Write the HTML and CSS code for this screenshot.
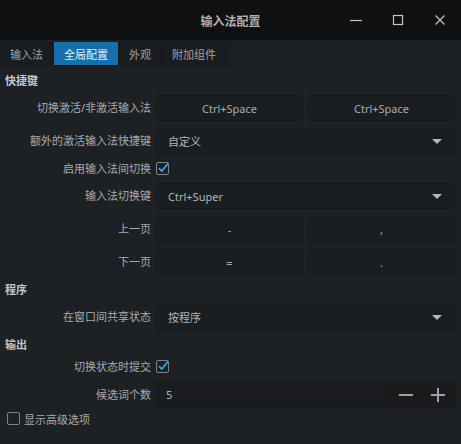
FILE: index.html
```html
<!DOCTYPE html>
<html lang="zh">
<head>
<meta charset="utf-8">
<link rel="stylesheet" href="styles.css">
</head>
<body>
<div class="window">
  <div class="titlebar">
    <div></div>
    <div class="title">输入法配置</div>
    <div class="controls">
      <div class="ctl"><svg width="14" height="14" viewBox="0 0 14 14"><path d="M1 7.5H13" stroke="#c4c4c4" stroke-width="1.2"/></svg></div>
      <div class="ctl"><svg width="14" height="14" viewBox="0 0 14 14"><rect x="2.5" y="2.5" width="9" height="9" fill="none" stroke="#c4c4c4" stroke-width="1.2"/></svg></div>
      <div class="ctl"><svg width="14" height="14" viewBox="0 0 14 14"><path d="M2.5 2.5L11.5 11.5M11.5 2.5L2.5 11.5" stroke="#c4c4c4" stroke-width="1.2"/></svg></div>
    </div>
  </div>
  <div class="tabs">
    <div class="tab">输入法</div>
    <div class="tab active">全局配置</div>
    <div class="tab">外观</div>
    <div class="tab">附加组件</div>
  </div>
  <div class="content">
    <div class="heading">快捷键</div>
    <div class="form">
      <div class="label">切换激活/非激活输入法</div>
      <div class="pair"><div class="btn">Ctrl+Space</div><div class="btn">Ctrl+Space</div></div>

      <div class="label">额外的激活输入法快捷键</div>
      <div class="combo"><span>自定义</span><i class="arrow"></i></div>

      <div class="label short">启用输入法间切换</div>
      <div class="checkrow"><span class="check on"><svg width="14" height="14" viewBox="0 0 14 14"><path d="M3 7.2L5.8 10L12 2.5" fill="none" stroke="#3daee9" stroke-width="1.6"/></svg></span></div>

      <div class="label">输入法切换键</div>
      <div class="combo"><span>Ctrl+Super</span><i class="arrow"></i></div>

      <div class="label">上一页</div>
      <div class="pair"><div class="btn">-</div><div class="btn">,</div></div>

      <div class="label">下一页</div>
      <div class="pair"><div class="btn">=</div><div class="btn">.</div></div>
    </div>

    <div class="heading">程序</div>
    <div class="form">
      <div class="label">在窗口间共享状态</div>
      <div class="combo"><span>按程序</span><i class="arrow"></i></div>
    </div>

    <div class="heading">输出</div>
    <div class="form">
      <div class="label short">切换状态时提交</div>
      <div class="checkrow"><span class="check on"><svg width="14" height="14" viewBox="0 0 14 14"><path d="M3 7.2L5.8 10L12 2.5" fill="none" stroke="#3daee9" stroke-width="1.6"/></svg></span></div>

      <div class="label">候选词个数</div>
      <div class="spin">
        <div class="spinval">5</div>
        <div class="spinbtns">
          <svg width="16" height="16" viewBox="0 0 16 16"><path d="M1 8H15" stroke="#9ba1a7" stroke-width="2"/></svg>
          <svg width="16" height="16" viewBox="0 0 16 16"><path d="M1 8H15M8 1V15" stroke="#9ba1a7" stroke-width="2"/></svg>
        </div>
      </div>
    </div>

    <div class="advanced"><span class="check"></span><span>显示高级选项</span></div>
  </div>
</div>
</body>
</html>
```

FILE: styles.css
```css
* { box-sizing: border-box; }
html, body { margin: 0; padding: 0; }
body {
  width: 461px;
  height: 444px;
  overflow: hidden;
  background: #1e2124;
  font-family: "Noto Sans", "Noto Sans CJK SC", sans-serif;
  font-size: 11px;
  color: #a6abb0;
}
.window { width: 461px; height: 444px; display: flex; flex-direction: column; }

.titlebar {
  height: 40px;
  background: #0f1011;
  display: grid;
  grid-template-columns: 1fr auto 1fr;
  align-items: center;
}
.title {
  font-size: 12px;
  font-weight: bold;
  color: #b0b0b0;
  padding-top: 1px;
}
.controls { display: flex; justify-content: flex-end; height: 40px; }
.ctl { width: 42px; height: 40px; display: flex; align-items: center; justify-content: center; }

.tabs {
  height: 26px;
  display: flex;
  background: #1c1f22;
  border-bottom: 1px solid #191b1e;
}
.tab {
  margin-top: 2px;
  padding: 0 9px;
  display: flex;
  align-items: center;
  justify-content: center;
  background: #1a1d20;
  border: 1px solid #16181a;
  border-bottom: none;
  margin-right: 1px;
  color: #9ea3a8;
  font-size: 11px;
}
.tab:first-child { border-left: none; padding-left: 10px; }
.tab.active { background: #1670ae; color: #e6eef5; border-color: #1670ae; }

.content { flex: 1; padding: 7px 6px 0 5px; display: flex; flex-direction: column; }

.heading {
  height: 15px;
  line-height: 15px;
  font-weight: bold;
  color: #c3c7cb;
  margin: 0 0 7px 0;
}
.form {
  display: grid;
  grid-template-columns: 146px 1fr;
  column-gap: 5px;
  row-gap: 7px;
  margin-bottom: 7px;
  align-items: center;
}
.label { text-align: right; white-space: nowrap; line-height: 26px; }
.label.short { line-height: 15px; }

.pair { display: grid; grid-template-columns: 1fr 1fr; column-gap: 5px; }
.btn {
  height: 26px;
  line-height: 25px;
  text-align: center;
  background: #1b1e21;
  border: 1px solid #15171a;
  border-radius: 3px;
  color: #a6abb0;
}
.combo {
  height: 26px;
  display: flex;
  align-items: center;
  justify-content: space-between;
  padding: 0 12px 0 11px;
  background: #1b1e21;
  border: 1px solid #15171a;
  border-radius: 3px;
  color: #b0b5ba;
}
.arrow {
  width: 0; height: 0;
  border-left: 5px solid transparent;
  border-right: 5px solid transparent;
  border-top: 5px solid #b4b8bc;
}
.checkrow { height: 15px; display: flex; align-items: center; }
.check {
  position: relative;
  width: 13px; height: 13px;
  border: 1px solid #7c838a;
  border-radius: 2px;
  display: inline-block;
  flex: none;
}
.check svg { position: absolute; left: -1px; top: -2px; }

.spin {
  height: 27px;
  display: flex;
  border: 1px solid #15171a;
  background: #1a1c1f;
}
.spinval { flex: 1; padding-left: 9px; line-height: 25px; color: #b0b5ba; }
.spinbtns {
  width: 65px;
  background: #1b1b1d;
  border-left: 1px solid #151618;
  display: flex;
  align-items: center;
  justify-content: flex-start;
  gap: 16px;
  padding-left: 8px;
}
.advanced {
  display: flex;
  align-items: center;
  gap: 4px;
  margin-left: 2px;
  margin-top: -4px;
  height: 15px;
}
```
